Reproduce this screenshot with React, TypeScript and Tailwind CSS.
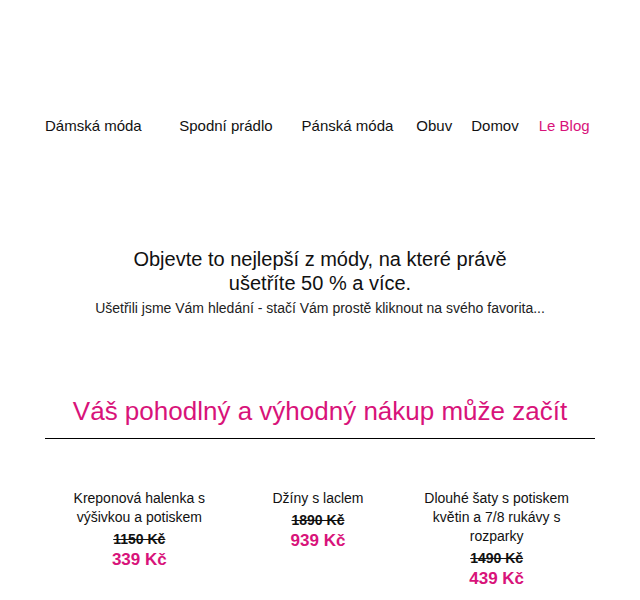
export default function App() {
  const navItems = [
    { label: 'Dámská móda', cls: 'ml-[45px]' },
    { label: 'Spodní prádlo', cls: 'ml-[37.5px]' },
    { label: 'Pánská móda', cls: 'ml-[29px]' },
    { label: 'Obuv', cls: 'ml-[23px]' },
    { label: 'Domov', cls: 'ml-[19px]' },
    { label: 'Le Blog', cls: 'ml-[20px] text-[#d8137a]' },
  ];

  const products = [
    { title: 'Kreponová halenka s výšivkou a potiskem', oldPrice: '1150 Kč', price: '339 Kč' },
    { title: 'Džíny s laclem', oldPrice: '1890 Kč', price: '939 Kč' },
    { title: 'Dlouhé šaty s potiskem květin a 7/8 rukávy s rozparky', oldPrice: '1490 Kč', price: '439 Kč' },
  ];

  return (
    <div className="min-h-screen bg-white text-[#111] font-['Liberation_Sans',Arial,sans-serif]">
      {/* Navigation */}
      <nav className="flex pt-[116px] text-[15px] leading-5">
        {navItems.map((item) => (
          <a key={item.label} href="#" className={item.cls}>
            {item.label}
          </a>
        ))}
      </nav>

      {/* Hero */}
      <div className="mt-[111px] text-center">
        <h1 className="mx-auto w-[400px] text-[20px] leading-6">
          Objevte to nejlepší z módy, na které právě ušetříte 50 % a více.
        </h1>
        <p className="mt-[3px] text-[14px] leading-5 text-[#222]">
          Ušetřili jsme Vám hledání - stačí Vám prostě kliknout na svého favorita...
        </p>
      </div>

      {/* Section heading */}
      <div className="mx-[45px] mt-[78px]">
        <h2 className="text-center text-[26px] leading-[30px] text-[#d8137a]">
          Váš pohodlný a výhodný nákup může začít
        </h2>
        <div className="mt-3 border-t border-black" />
      </div>

      {/* Products */}
      <div className="ml-[50px] mt-[50px] grid w-[536px] grid-cols-3">
        {products.map((p) => (
          <div key={p.title} className="px-[9px] text-center">
            <h3 className="text-[14px] leading-[19px] text-[#111]">{p.title}</h3>
            <div className="mt-1 text-[14px] font-bold leading-[17px] line-through">{p.oldPrice}</div>
            <div className="mt-0.5 text-[17px] font-bold leading-5 text-[#d8137a]">{p.price}</div>
          </div>
        ))}
      </div>
    </div>
  );
}
